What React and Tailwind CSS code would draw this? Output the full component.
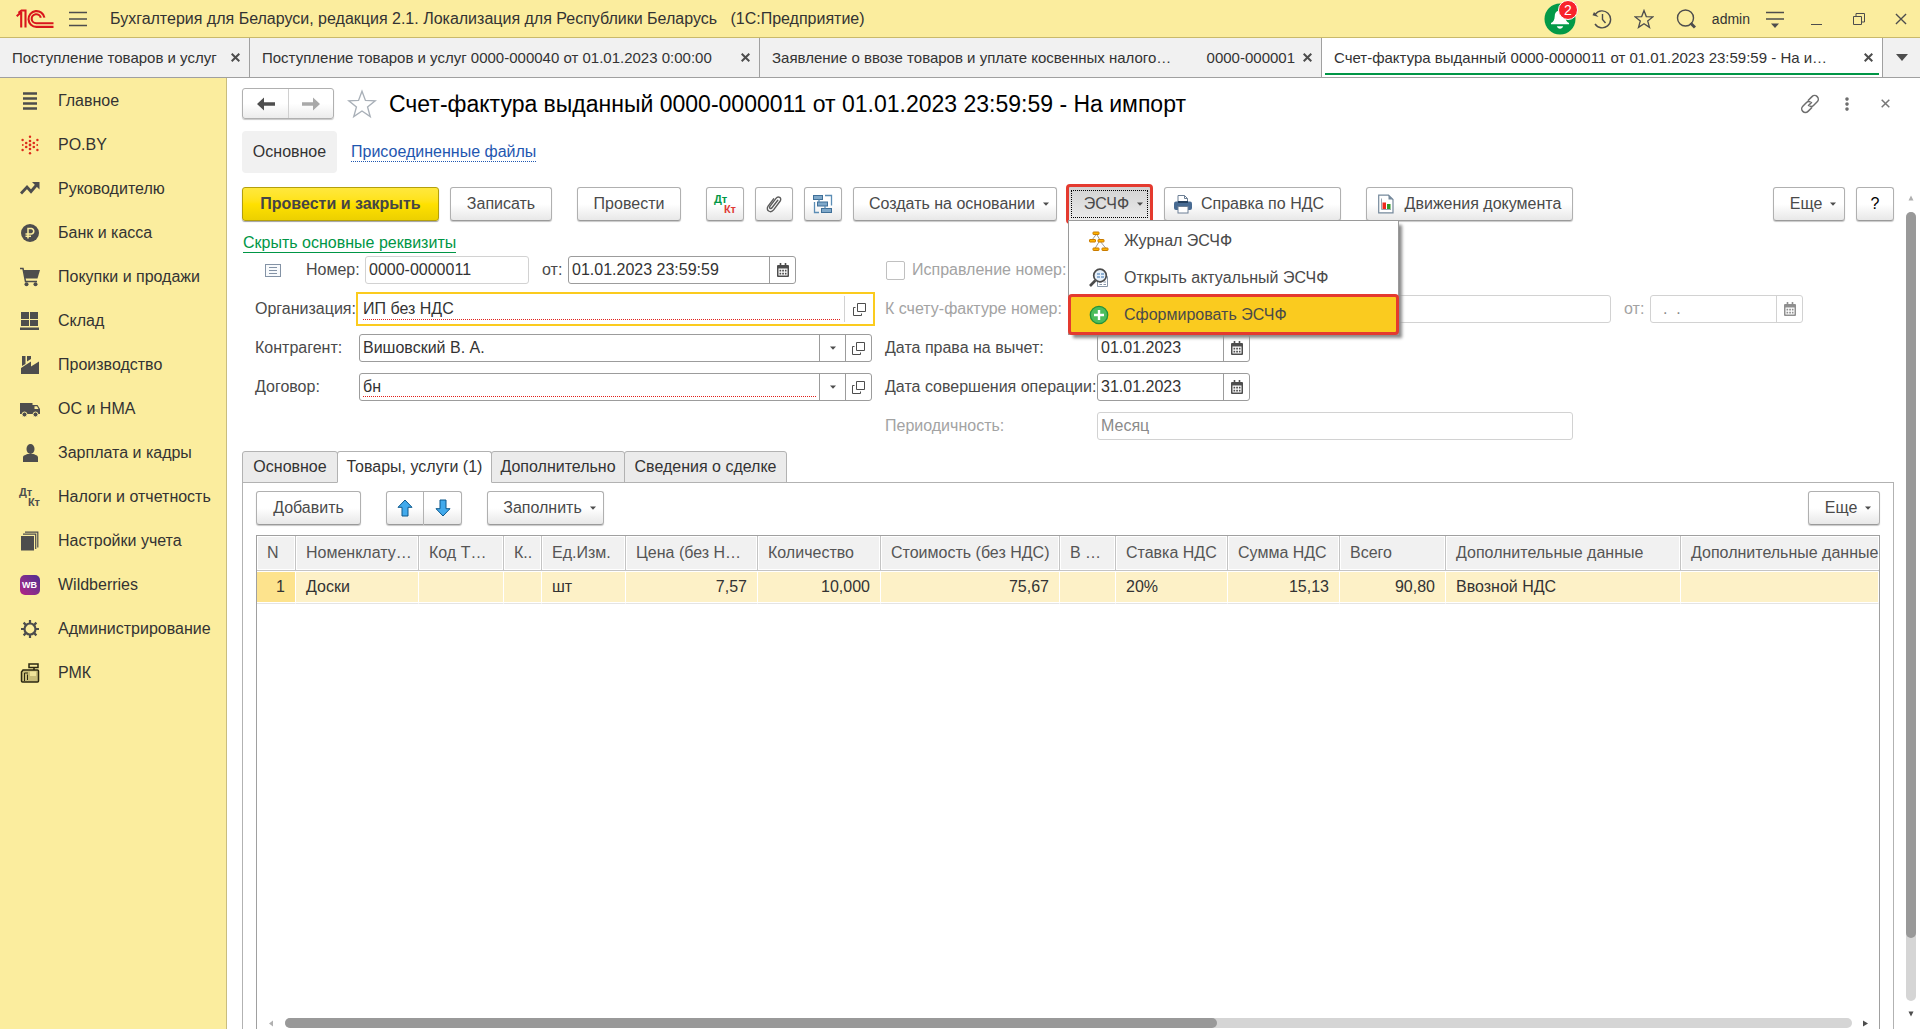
import React, { useState } from "react";
import clsx from "clsx";

const DARK = "#4d4d4d";

/* ---------- icons ---------- */

const Svg = ({ w = 20, h = 20, children, className }) => (
    <svg width={w} height={h} viewBox={`0 0 ${w} ${h}`} fill="none" className={clsx("shrink-0", className)} aria-hidden="true">
        {children}
    </svg>
);

const Logo = () => (
    <Svg w={38} h={20}>
        <g stroke="#d9161c" strokeWidth="2.1">
            <path d="M0.700 7.200L4.800 3.500H5.200V18.500" />
            <path d="M2.500 3.800L5.500 1.500H9.500V18.500" />
            <path d="M28.400 8.600A8 7.900 0 1 0 20.400 17.900H37.500" />
            <path d="M24.800 8.800A4.600 4.500 0 1 0 20.400 14.200H37.500" />
        </g>
    </Svg>
);

const MenuIcon = () => (
    <Svg w={18} h={16}>
        <path d="M0 1.500H18M0 8H18M0 14.500H18" stroke={DARK} strokeWidth="1.300" />
    </Svg>
);

const BellIcon = () => (
    <Svg w={32} h={32}>
        <circle cx="16" cy="16" r="15.500" fill="#039a48" />
        <path d="M16 6c-1 0-1.600.7-1.600 1.600-2.700.9-3.600 3-3.700 5.800-.2 3.400-1 5.200-3.700 6.700v1.200h18v-1.200c-2.700-1.500-3.500-3.300-3.700-6.700-.1-2.800-1-4.900-3.700-5.800C17.600 6.700 17 6 16 6z" fill="#fff" />
        <path d="M12.800 23.200h6.400c-.5 1.600-1.600 2.500-3.200 2.500s-2.700-.9-3.200-2.500z" fill="#fff" />
    </Svg>
);

const HistoryIcon = () => (
    <Svg w={20} h={20}>
        <path d="M3.300 5.300A8.500 8.500 0 1 1 3 15" stroke={DARK} strokeWidth="1.400" />
        <path d="M0.500 6.300L6.500 8L2 3z" fill={DARK} />
        <path d="M10.500 5V10.500L13.500 14" stroke={DARK} strokeWidth="1.400" />
    </Svg>
);

const StarIcon = ({ size = 20, color = DARK }) => (
    <svg width={size} height={size} viewBox="0 0 20 20" fill="none" className="shrink-0" aria-hidden="true">
        <path d="M10 1.500L12.300 7.600L18.800 7.900L13.700 12L15.500 18.400L10 14.700L4.500 18.400L6.300 12L1.200 7.900L7.700 7.600z" stroke={color} strokeWidth={size > 24 ? 0.9 : 1.3} />
    </svg>
);

const SearchIcon = () => (
    <Svg w={20} h={20}>
        <circle cx="9.500" cy="9" r="8" stroke={DARK} strokeWidth="1.400" />
        <path d="M14.500 14L19 18.500" stroke={DARK} strokeWidth="3" />
    </Svg>
);

const SettingsIcon = () => (
    <Svg w={18} h={18}>
        <path d="M0 2.500H18M0 9H18" stroke={DARK} strokeWidth="1.400" />
        <path d="M5 13.500H13L9 18z" fill={DARK} />
    </Svg>
);

const CrossIcon = ({ size = 9, color = DARK, width = 2 }) => (
    <svg width={size} height={size} viewBox="0 0 9 9" className="shrink-0" aria-hidden="true">
        <path d="M0.700 0.700L8.300 8.300M8.300 0.700L0.700 8.300" stroke={color} strokeWidth={width} />
    </svg>
);

const ArrowIcon = ({ color, flip }) => (
    <Svg w={18} h={14} className={flip && "rotate-180"}>
        <path d="M0 7L7 0.500V5.200H18V8.800H7V13.500z" fill={color} />
    </Svg>
);

const Caret = ({ className }) => (
    <Svg w={6} h={4} className={className}>
        <path d="M0 0.500H6L3 3.700z" fill={DARK} />
    </Svg>
);

const LinkIcon = () => (
    <Svg w={20} h={20}>
        <g stroke="#6e6e6e" strokeWidth="1.500" strokeLinecap="round">
            <path d="M8.300 6.300L12 2.600a3.600 3.600 0 0 1 5.200 5.200L13.500 11.500a3.600 3.600 0 0 1-3.500.8" />
            <path d="M11.700 13.700L8 17.400a3.600 3.600 0 0 1-5.200-5.200L6.500 8.500A3.600 3.600 0 0 1 10 7.700" />
            <path d="M8.500 11.500L11.500 8.500" />
        </g>
    </Svg>
);

const DtKt = ({ dt, kt }) => (
    <span className="flex w-[22px] flex-col text-[11px] leading-[10px] font-bold">
        <span className={clsx("self-start", dt)}>Дт</span>
        <span className={clsx("self-end", kt)}>Кт</span>
    </span>
);

const ClipIcon = () => (
    <Svg w={18} h={20}>
        <path
            d="M12.800 6.300L7 13.800c-1.200 1.600-3.200.2-2.100-1.400L11 4.300c2.200-2.800 6.200-.4 4.200 2.700L8.600 15.900c-3 3.800-8.300.4-5.500-3.700L8.600 4.800"
            stroke="#5c5c5c"
            strokeWidth="1.400"
            strokeLinecap="round"
        />
    </Svg>
);

const StructureIcon = () => (
    <Svg w={20} h={20}>
        <g fill="#7fa8c9" stroke="#3f6f98">
            <rect x="0.500" y="1.500" width="9" height="4" />
            <rect x="4.500" y="8" width="10" height="4" />
            <rect x="8.500" y="14.500" width="10" height="4" />
        </g>
        <path d="M12 1.500H18.500V11.500M1.500 8V18.500H6M6 5.500V8M12 12V14.500" stroke="#5b8db5" strokeWidth="1.300" />
    </Svg>
);

const PrinterIcon = () => (
    <Svg w={20} h={20}>
        <path d="M5 8V1.500H11.500L14.500 4.500V8" fill="#fff" stroke="#6c7f95" />
        <path d="M11.500 1.500V4.500H14.500" stroke="#6c7f95" />
        <rect x="1" y="7.500" width="18" height="8.500" rx="2" fill="#476a92" />
        <rect x="5" y="7" width="10" height="2" fill="#24405f" />
        <rect x="5" y="12.500" width="10" height="6.500" fill="#fff" stroke="#6c7f95" />
    </Svg>
);

const ReportIcon = () => (
    <Svg w={16} h={20}>
        <path d="M0.700 1.200H10.500L15 5.500V18.800H0.700z" fill="#fff" stroke="#75899c" strokeWidth="1.200" />
        <path d="M10.500 1.200V5.500H15z" fill="#75899c" />
        <path d="M3.500 4.500V15.500H13" stroke="#9aa7b3" />
        <rect x="4.500" y="8.500" width="3.500" height="6.500" fill="#ee2a1c" />
        <rect x="9" y="10" width="3.500" height="5" fill="#2f9a2a" />
    </Svg>
);

const BlueArrow = ({ down }) => (
    <Svg w={16} h={18} className={down && "rotate-180"}>
        <path d="M8 1L15 8.300H11V17H5V8.300H1z" fill="#42aaec" stroke="#0c588c" strokeLinejoin="round" />
    </Svg>
);

const CalendarIcon = ({ color = DARK }) => (
    <Svg w={12} h={14}>
        <path d="M0 3a1 1 0 0 1 1-1H11a1 1 0 0 1 1 1V13a1 1 0 0 1-1 1H1a1 1 0 0 1-1-1z" fill={color} />
        <path d="M1.500 5.500H10.500V12.500H1.500z" fill="#fff" />
        <path d="M2.500 7.700H9.500M2.500 10.600H9.500" stroke={color} strokeWidth="1.700" strokeDasharray="1.700 1" />
        <path d="M3.500 0V3.500M8.500 0V3.500" stroke={color} strokeWidth="1.600" />
    </Svg>
);

const OpenIcon = () => (
    <Svg w={13} h={13}>
        <path d="M4.500 0.500H12.500V8.500H4.500z" stroke={DARK} />
        <path d="M2.500 4.500H0.500V12.500H8.500V10.500" stroke={DARK} />
    </Svg>
);

const JournalIcon = () => (
    <Svg w={20} h={20}>
        <path d="M7.500 3L3 9M7.500 3L11 9M10.500 10L6 17.500M11 10L17 17.500" stroke="#9b9b9b" />
        <g fill="#ffb400" stroke="#c97b00">
            <rect x="4" y="1" width="6" height="2.500" rx="0.500" />
            <rect x="0.500" y="8.500" width="6" height="2.500" rx="0.500" />
            <rect x="9" y="8.500" width="6" height="2.500" rx="0.500" />
            <rect x="4" y="17" width="6" height="2.500" rx="0.500" />
            <rect x="13" y="17" width="6" height="2.500" rx="0.500" />
        </g>
    </Svg>
);

const LensIcon = () => (
    <Svg w={20} h={20}>
        <path d="M8.500 8.500H18.500V18.500H8.500z" fill="#fff" stroke="#8796a8" />
        <path d="M10.500 14H13M14.500 14H17M10.500 16.500H13M14.500 16.500H17" stroke="#8796a8" />
        <circle cx="11" cy="7.500" r="6.300" fill="#e6f0fa" stroke="#4b4b4b" strokeWidth="1.700" />
        <path d="M8 6H11M12 6H15M8 9H11M12 9H15" stroke="#8fb0d4" strokeWidth="2" />
        <path d="M6.300 12.500L1 18" stroke="#4b4b4b" strokeWidth="2.600" />
    </Svg>
);

const PlusIcon = () => (
    <Svg w={20} h={20}>
        <circle cx="10" cy="10" r="8.700" fill="#4dbd5c" stroke="#23913a" strokeWidth="1.300" />
        <path d="M10 5V15M5 10H15" stroke="#fff" strokeWidth="2.400" />
    </Svg>
);

const ListIcon = () => (
    <Svg w={16} h={13}>
        <rect x="0.500" y="0.500" width="15" height="12" fill="#f8fafc" stroke="#8392a5" />
        <path d="M4 3.500H12M4 6.500H12M4 9.500H12" stroke="#8392a5" />
    </Svg>
);

/* sidebar icons */

const MainIcon = () => (
    <Svg>
        <path d="M3 2.500H17M3 7.500H17M3 12.500H17M3 17.500H17" stroke={DARK} strokeWidth="2.500" />
    </Svg>
);

const PoByIcon = () => (
    <Svg>
        <g fill="#dd2a1b">
            <circle cx="10" cy="1.800" r="1.200" />
            <circle cx="10" cy="6" r="1.300" />
            <circle cx="10" cy="10" r="1.400" />
            <circle cx="10" cy="14" r="1.300" />
            <circle cx="10" cy="18.200" r="1.200" />
            <circle cx="6.200" cy="8" r="1.300" />
            <circle cx="6.200" cy="12" r="1.300" />
            <circle cx="13.800" cy="8" r="1.300" />
            <circle cx="13.800" cy="12" r="1.300" />
            <circle cx="2.600" cy="5" r="1.200" />
            <circle cx="2.600" cy="15" r="1.200" />
            <circle cx="17.400" cy="5" r="1.200" />
            <circle cx="17.400" cy="15" r="1.200" />
            <circle cx="2.800" cy="10" r="0.900" />
            <circle cx="17.200" cy="10" r="0.900" />
        </g>
    </Svg>
);

const TrendIcon = () => (
    <Svg>
        <path d="M1 14.500L7 8L11 12.500L17 5.500" stroke={DARK} strokeWidth="2.800" />
        <path d="M12 3H19.500V10.500z" fill={DARK} />
    </Svg>
);

const RubleIcon = () => (
    <Svg>
        <circle cx="10" cy="10" r="9" fill={DARK} />
        <path d="M8 15.500V5.500H11.500a2.800 2.800 0 0 1 0 5.500H5.500M5.500 13.300H11" stroke="#fbed9e" strokeWidth="1.500" />
    </Svg>
);

const CartIcon = () => (
    <Svg>
        <path d="M0 1.500H3L5.500 14.500H17" stroke={DARK} strokeWidth="1.500" />
        <path d="M3.500 3H20L17.500 11.500H5z" fill={DARK} />
        <circle cx="6.500" cy="17.300" r="2" fill={DARK} />
        <circle cx="15.500" cy="17.300" r="2" fill={DARK} />
    </Svg>
);

const StockIcon = () => (
    <Svg>
        <path d="M1 1H9V8H1zM10 1H18V8H10zM1 9H9V15H1zM10 9H18V15H10zM0 16.500H19V19H0z" fill={DARK} />
    </Svg>
);

const FactoryIcon = () => (
    <Svg>
        <path d="M1 19V13L11 6.500V11.500L19 6.500V19z" fill={DARK} />
        <path d="M2 1H5.500V9L2 11zM7 1H11V4L7 6.500z" fill={DARK} />
    </Svg>
);

const TruckIcon = () => (
    <Svg>
        <path d="M0 4H12.500V15H0zM12 6H17.500L20 10V15H12z" fill={DARK} />
        <path d="M14.500 7.300H17L18.500 10H14.500z" fill="#fbed9e" />
        <circle cx="4.500" cy="15.500" r="2.500" fill={DARK} stroke="#fbed9e" />
        <circle cx="15.500" cy="15.500" r="2.500" fill={DARK} stroke="#fbed9e" />
    </Svg>
);

const PersonIcon = () => (
    <Svg>
        <ellipse cx="10.500" cy="6" rx="4" ry="5" fill={DARK} />
        <path d="M3 19v-4.500c0-2.500 3-2.500 4.500-3.500h6c1.500 1 4.500 1 4.500 3.500V19z" fill={DARK} />
    </Svg>
);

const BooksIcon = () => (
    <Svg>
        <path d="M1 5H14V19.500H1z" fill={DARK} />
        <path d="M3 3.200H15.700V18M5 1.200H17.800V16.500" stroke={DARK} strokeWidth="1.200" />
    </Svg>
);

const WbIcon = () => (
    <span className="flex size-5 items-center justify-center rounded-[5px] bg-linear-to-tr from-[#b31d86] to-[#4d2c91] text-[9px] font-bold text-white">
        WB
    </span>
);

const GearIcon = () => (
    <Svg>
        <circle cx="10" cy="10" r="5.500" stroke={DARK} strokeWidth="2.200" />
        <path
            d="M10 1V4.500M10 15.500V19M1 10H4.500M15.500 10H19M3.600 3.600L6.100 6.100M13.900 13.900L16.400 16.400M3.600 16.400L6.100 13.900M13.900 6.100L16.400 3.600"
            stroke={DARK}
            strokeWidth="2.200"
        />
    </Svg>
);

const RegisterIcon = () => (
    <Svg>
        <path d="M9 1H18V4.500H9zM14 4.500V7" stroke="#2c2812" strokeWidth="1.500" />
        <path d="M3 7H17.500a1 1 0 0 1 1 1V18a1 1 0 0 1-1 1H2.500a1 1 0 0 1-1-1V9z" fill="#c9bd78" stroke="#2c2812" strokeWidth="1.500" />
        <path d="M4.500 18V10H8M7.500 11.500V17" stroke="#2c2812" />
        <path d="M10 8.500H16V13H10z" fill="#efe39a" />
    </Svg>
);

/* ---------- data ---------- */

const sections = [
    { title: "Главное", icon: <MainIcon /> },
    { title: "PO.BY", icon: <PoByIcon /> },
    { title: "Руководителю", icon: <TrendIcon /> },
    { title: "Банк и касса", icon: <RubleIcon /> },
    { title: "Покупки и продажи", icon: <CartIcon /> },
    { title: "Склад", icon: <StockIcon /> },
    { title: "Производство", icon: <FactoryIcon /> },
    { title: "ОС и НМА", icon: <TruckIcon /> },
    { title: "Зарплата и кадры", icon: <PersonIcon /> },
    { title: "Налоги и отчетность", icon: <DtKt dt="text-[#4d4d4d]" kt="text-[#4d4d4d]" /> },
    { title: "Настройки учета", icon: <BooksIcon /> },
    { title: "Wildberries", icon: <WbIcon /> },
    { title: "Администрирование", icon: <GearIcon /> },
    { title: "РМК", icon: <RegisterIcon /> },
];

const columns = [
    { title: "N", value: "1", width: "w-[39px]", right: true },
    { title: "Номенклату…", value: "Доски", width: "w-[123px]" },
    { title: "Код Т…", value: "", width: "w-[85px]" },
    { title: "К..", value: "", width: "w-[38px]" },
    { title: "Ед.Изм.", value: "шт", width: "w-[84px]" },
    { title: "Цена (без Н…", value: "7,57", width: "w-[132px]", right: true },
    { title: "Количество", value: "10,000", width: "w-[123px]", right: true },
    { title: "Стоимость (без НДС)", value: "75,67", width: "w-[179px]", right: true },
    { title: "В …", value: "", width: "w-[56px]" },
    { title: "Ставка НДС", value: "20%", width: "w-[112px]" },
    { title: "Сумма НДС", value: "15,13", width: "w-[112px]", right: true },
    { title: "Всего", value: "90,80", width: "w-[106px]", right: true },
    { title: "Дополнительные данные", value: "Ввозной НДС", width: "w-[235px]" },
    { title: "Дополнительные данные", value: "", width: "w-auto" },
];

/* ---------- controls ---------- */

const Button = ({ children, className, ...props }) => (
    <button
        type="button"
        className={clsx(
            "flex h-[34px] shrink-0 items-center justify-center rounded-[3px] border border-[#b0b0b0] border-b-[#9a9a9a] bg-linear-to-b from-white from-50% to-[#e8e8e8] whitespace-nowrap text-[#4a4a4a] shadow-[0_1px_1px_#c8c8c8]",
            className
        )}
        {...props}
    >
        {children}
    </button>
);

const Field = ({ id, value, className, inputClass, disabled, muted, children }) => (
    <div
        className={clsx(
            "flex h-7 min-w-0 items-stretch rounded-[3px] border bg-white",
            disabled || muted ? "border-[#d2d2d2]" : "border-[#9c9c9c]",
            className
        )}
    >
        <input
            id={id}
            type="text"
            defaultValue={value}
            disabled={disabled}
            className={clsx("w-full min-w-0 bg-transparent px-[3px] outline-none", disabled ? "text-[#8a8a8a]" : "text-[#333333]", inputClass)}
        />
        {children}
    </div>
);

const FieldButton = ({ label, disabled, className, children }) => (
    <button
        type="button"
        aria-label={label}
        className={clsx("flex w-[26px] shrink-0 items-center justify-center border-l", disabled ? "border-[#d2d2d2]" : "border-[#9c9c9c]", className)}
    >
        {children}
    </button>
);

const RefField = ({ id, value, error }) => (
    <Field id={id} value={value} className="flex-1" inputClass={error && "mx-[3px] my-[3px] border-b border-dotted border-[#e0201b] px-0!"}>
        <FieldButton label="Выбрать">
            <Caret />
        </FieldButton>
        <FieldButton label="Открыть">
            <OpenIcon />
        </FieldButton>
    </Field>
);

const WindowTab = ({ title, number, width, active }) => (
    <div
        className={clsx(
            "relative flex h-full items-center border-r border-[#a0a0a0] pr-[9px] pl-3 text-[15px]",
            active ? "min-w-0 bg-white" : "shrink-0 bg-[#f1f1f1]",
            width
        )}
    >
        <button type="button" className="flex min-w-0 flex-1 justify-between whitespace-nowrap">
            <span className="truncate">{title}</span>
            {number && <span className="shrink-0">{number}</span>}
        </button>
        <button type="button" aria-label="Закрыть" className="ml-2 shrink-0">
            <CrossIcon />
        </button>
        {active && <span className="absolute inset-x-[3px] bottom-[2px] h-[2px] bg-[#009646]" />}
    </div>
);

/* ---------- page parts ---------- */

const TitleBar = () => (
    <header className="flex h-[38px] shrink-0 items-center border-b border-[#c9b96b] bg-[#fbed9e] pr-[13px] pl-4">
        <Logo />
        <button type="button" aria-label="Меню" className="ml-[15px]">
            <MenuIcon />
        </button>
        <div className="ml-[23px] flex-1 truncate whitespace-pre">
            Бухгалтерия для Беларуси, редакция 2.1. Локализация для Республики Беларусь   (1С:Предприятие)
        </div>
        <button type="button" aria-label="Уведомления" className="relative">
            <BellIcon />
            <span className="absolute -top-[3px] left-[14px] flex size-5 items-center justify-center rounded-full border border-white bg-[#f8232b] text-sm text-white">2</span>
        </button>
        <button type="button" aria-label="История" className="ml-4">
            <HistoryIcon />
        </button>
        <button type="button" aria-label="Избранное" className="ml-[22px]">
            <StarIcon />
        </button>
        <button type="button" aria-label="Поиск" className="ml-[22px]">
            <SearchIcon />
        </button>
        <button type="button" className="ml-4 text-sm">admin</button>
        <button type="button" aria-label="Настройки" className="ml-4">
            <SettingsIcon />
        </button>
        <button type="button" aria-label="Свернуть" className="mt-3 ml-[27px] h-px w-[11px] bg-[#4d4d4d]" />
        <button type="button" aria-label="Восстановить" className="ml-[31px]">
            <Svg w={12} h={12}>
                <path d="M0.500 3.500H8.500V11.500H0.500zM3 3V0.500H11.500V9H9" stroke={DARK} />
            </Svg>
        </button>
        <button type="button" aria-label="Закрыть" className="ml-[30px]">
            <CrossIcon size={12} width={1} />
        </button>
    </header>
);

const Sidebar = () => (
    <nav className="flex w-[227px] shrink-0 flex-col border-r border-[#c9bd7e] bg-[#fbed9e] pt-px">
        {sections.map((item) => (
            <button key={item.title} type="button" className="flex h-11 items-center gap-[18px] pl-[19px] text-left whitespace-nowrap">
                <span className="flex w-[21px] shrink-0 justify-center">{item.icon}</span>
                {item.title}
            </button>
        ))}
    </nav>
);

const EschfMenu = () => (
    <div className="absolute top-9 left-[2px] z-10 w-[331px] border border-[#9a9a9a] bg-white pt-px shadow-[4px_4px_3px_-1px_#8a8a8a]">
        <button type="button" className="flex h-[37px] w-full items-center gap-[15px] pl-5 text-[#4a4a4a]">
            <JournalIcon />
            Журнал ЭСЧФ
        </button>
        <button type="button" className="flex h-[37px] w-full items-center gap-[15px] pl-5 text-[#4a4a4a]">
            <LensIcon />
            Открыть актуальный ЭСЧФ
        </button>
        <button type="button" className="-mx-px -mt-[2px] -mb-px flex h-[41px] w-[331px] items-center gap-[15px] rounded-[4px] border-3 border-[#e43a2f] bg-[#facb1f] pl-[18px] text-[#4a4a4a]">
            <PlusIcon />
            Сформировать ЭСЧФ
        </button>
    </div>
);

const Toolbar = () => {
    const [open, setOpen] = useState(true);

    return (
        <div className="flex items-center">
            <button
                type="button"
                className="h-[34px] w-[197px] shrink-0 rounded-[3px] border border-[#b39f0d] bg-linear-to-b from-[#ffe83c] via-[#ffe100] to-[#ecd000] font-bold whitespace-nowrap text-[#454545] shadow-[0_1px_1px_#a0a0a0]"
            >
                Провести и закрыть
            </button>
            <Button className="ml-[11px] w-[102px]">Записать</Button>
            <Button className="ml-[25px] w-[104px]">Провести</Button>
            <Button className="ml-[25px] w-[38px]" aria-label="Проводки">
                <DtKt dt="text-[#029746]" kt="text-[#e03a35]" />
            </Button>
            <Button className="ml-[11px] w-[38px]" aria-label="Файлы">
                <ClipIcon />
            </Button>
            <Button className="ml-[11px] w-[38px]" aria-label="Структура подчиненности">
                <StructureIcon />
            </Button>
            <Button className="ml-[11px] w-[204px] gap-2 pl-2">
                Создать на основании <Caret />
            </Button>
            <div className="relative -my-1 ml-[9px] shrink-0">
                <button
                    type="button"
                    aria-expanded={open}
                    onClick={() => setOpen(!open)}
                    className="flex h-10 w-[87px] items-center justify-center rounded-[4px] border-3 border-[#e43a2f] bg-linear-to-b from-[#d2d2d2] to-[#ececec] p-[2px] text-[#4a4a4a]"
                >
                    <span className="flex h-7 w-full items-center justify-center gap-2 border border-dotted border-black pl-2">
                        ЭСЧФ <Caret />
                    </span>
                </button>
                {open && <EschfMenu />}
            </div>
            <Button className="ml-[11px] w-[177px] gap-2 pr-2">
                <PrinterIcon /> Справка по НДС
            </Button>
            <Button className="ml-[25px] w-[207px] gap-[11px]">
                <ReportIcon /> Движения документа
            </Button>
            <Button className="ml-auto w-[72px] gap-2 pl-2">
                Еще <Caret />
            </Button>
            <Button className="ml-[11px] w-[38px] text-black!">?</Button>
        </div>
    );
};

const DocumentForm = () => (
    <form className="mt-[3px] flex text-[#4a4a4a]">
        <div className="flex w-[643px] shrink-0 flex-col gap-[11px] pl-[13px]">
            <div className="flex h-7 items-center">
                <span className="ml-[10px]">
                    <ListIcon />
                </span>
                <label htmlFor="number" className="ml-[25px] w-[59px]">Номер:</label>
                <Field id="number" value="0000-0000011" className="w-[164px]" muted />
                <label htmlFor="date" className="ml-[13px] w-[26px]">от:</label>
                <Field id="date" value="01.01.2023 23:59:59" className="w-[228px]">
                    <FieldButton label="Календарь">
                        <CalendarIcon />
                    </FieldButton>
                </Field>
            </div>
            <div className="flex h-7 items-center pr-[10px]">
                <label htmlFor="org" className="w-[101px] shrink-0 whitespace-nowrap">Организация:</label>
                <div className="flex h-[34px] flex-1 items-center border-2 border-[#fbcb1e] bg-white pl-[5px]">
                    <input
                        id="org"
                        type="text"
                        defaultValue="ИП без НДС"
                        className="mr-1 h-[22px] min-w-0 flex-1 border-b border-dotted border-[#e0201b] text-[#333333] outline-none"
                    />
                    <FieldButton label="Открыть" className="h-[26px] w-[29px]! border-[#d2d2d2]!">
                        <OpenIcon />
                    </FieldButton>
                </div>
            </div>
            <div className="flex h-7 items-center pr-[13px]">
                <label htmlFor="partner" className="w-[104px] shrink-0">Контрагент:</label>
                <RefField id="partner" value="Вишовский В. А." />
            </div>
            <div className="flex h-7 items-center pr-[13px]">
                <label htmlFor="contract" className="w-[104px] shrink-0">Договор:</label>
                <RefField id="contract" value="бн" error />
            </div>
        </div>

        <div className="flex flex-1 flex-col gap-[11px]">
            <div className="flex h-7 items-center text-[#a3a3a3]">
                <input id="fix" type="checkbox" disabled className="mr-[7px] ml-px size-[19px] appearance-none rounded-[2px] border border-[#c0c0c0] bg-white" />
                <label htmlFor="fix">Исправление номер:</label>
            </div>
            <div className="flex h-7 items-center text-[#a3a3a3]">
                <label htmlFor="base" className="w-[212px] shrink-0">К счету-фактуре номер:</label>
                <Field id="base" className="w-[514px]" disabled />
                <label htmlFor="baseDate" className="ml-[13px] w-[26px]">от:</label>
                <Field id="baseDate" value="  .  ." className="w-[153px]" inputClass="whitespace-pre" disabled>
                    <FieldButton label="Календарь" disabled>
                        <CalendarIcon color="#8f8f8f" />
                    </FieldButton>
                </Field>
            </div>
            <div className="flex h-7 items-center">
                <label htmlFor="deduct" className="w-[212px] shrink-0">Дата права на вычет:</label>
                <Field id="deduct" value="01.01.2023" className="w-[153px]">
                    <FieldButton label="Календарь">
                        <CalendarIcon />
                    </FieldButton>
                </Field>
            </div>
            <div className="flex h-7 items-center">
                <label htmlFor="operation" className="w-[212px] shrink-0 whitespace-nowrap">Дата совершения операции:</label>
                <Field id="operation" value="31.01.2023" className="w-[153px]">
                    <FieldButton label="Календарь">
                        <CalendarIcon />
                    </FieldButton>
                </Field>
            </div>
            <div className="flex h-7 items-center text-[#a3a3a3]">
                <label htmlFor="period" className="w-[212px] shrink-0">Периодичность:</label>
                <Field id="period" value="Месяц" className="w-[476px]" disabled />
            </div>
        </div>
    </form>
);

const FormTab = ({ title, width, active }) => (
    <button
        type="button"
        role="tab"
        aria-selected={active}
        className={clsx(
            "-mr-px h-8 shrink-0 rounded-t-[3px] border border-[#b2b2b2] whitespace-nowrap",
            active ? "relative border-b-white bg-white" : "bg-[#ebebeb]",
            width
        )}
    >
        {title}
    </button>
);

const GoodsTable = () => (
    <div className="flex min-h-0 flex-1 flex-col overflow-hidden border border-b-0 border-[#a0a0a0]">
        <table className="w-full table-fixed border-separate border-spacing-0 text-left whitespace-nowrap">
            <thead>
                <tr className="h-[35px] text-[#555555]">
                    {columns.map((col, i) => (
                        <th
                            key={i}
                            className={clsx(
                                "overflow-hidden border-b border-[#c4c4c4] bg-[#f1f1f1] pl-[10px] font-normal shadow-[inset_0_0_0_1px_#ffffff]",
                                i < columns.length - 1 && "border-r",
                                col.width
                            )}
                        >
                            {col.title}
                        </th>
                    ))}
                </tr>
            </thead>
            <tbody>
                <tr className="h-[33px] text-[#333333]">
                    {columns.map((col, i) => (
                        <td
                            key={i}
                            className={clsx(
                                "border-r border-b border-r-white border-b-[#e4e4e4] px-[10px] shadow-[inset_0_1px_0_#ffffff,inset_0_-1px_0_#ffffff]",
                                i === 0 ? "bg-[#fde38d]" : "bg-[#fdf1c7]",
                                col.right && "text-right"
                            )}
                        >
                            {col.value}
                        </td>
                    ))}
                </tr>
            </tbody>
        </table>
        <div className="mt-auto flex h-[11px] items-start pr-[10px] pl-[11px]">
            <Svg w={6} h={10}>
                <path d="M5 2.500V8.500L1 5.500z" fill="#b0b0b0" />
            </Svg>
            <div className="mx-[11px] h-[10px] flex-1 rounded-full bg-[#d5d5d5]">
                <div className="h-full w-[59.5%] rounded-full bg-[#999999]" />
            </div>
            <Svg w={6} h={10}>
                <path d="M0 2.500V8.500L5 5.500z" fill={DARK} />
            </Svg>
        </div>
    </div>
);

const App = () => {
    return (
        <div className="flex h-screen flex-col overflow-hidden bg-white font-['Liberation_Sans',Arial,sans-serif] text-base leading-5 text-[#333333]">
            <TitleBar />
            <div className="flex h-10 shrink-0 border-b border-[#a0a0a0] bg-[#f1f1f1]">
                <WindowTab title="Поступление товаров и услуг" width="w-[250px]" />
                <WindowTab title="Поступление товаров и услуг 0000-000040 от 01.01.2023 0:00:00" width="w-[510px]" />
                <WindowTab title="Заявление о ввозе товаров и уплате косвенных налого…" number="0000-000001" width="w-[562px]" />
                <WindowTab title="Счет-фактура выданный 0000-0000011 от 01.01.2023 23:59:59 - На и…" width="flex-1" active />
                <button type="button" aria-label="Все окна" className="flex w-[37px] shrink-0 items-center justify-center">
                    <Svg w={12} h={7}>
                        <path d="M0 0H12L6 7z" fill={DARK} />
                    </Svg>
                </button>
            </div>

            <div className="flex min-h-0 flex-1">
                <Sidebar />
                <main className="flex min-w-0 flex-1 flex-col pt-[10px] pl-[15px]">
                    <div className="flex h-[31px] shrink-0 items-center pr-[30px]">
                        <div className="flex h-[31px] shrink-0 rounded-[3px] border border-[#b0b0b0] bg-linear-to-b from-white from-50% to-[#ececec] shadow-[0_1px_1px_#c8c8c8]">
                            <button type="button" aria-label="Назад" className="flex w-[45px] items-center justify-center">
                                <ArrowIcon color={DARK} />
                            </button>
                            <button type="button" aria-label="Вперед" className="flex w-[45px] items-center justify-center border-l border-[#d0d0d0]">
                                <ArrowIcon color="#a9a9a9" flip />
                            </button>
                        </div>
                        <button type="button" aria-label="В избранное" className="ml-[13px]">
                            <StarIcon size={30} color="#a9b0b8" />
                        </button>
                        <h1 className="ml-3 flex-1 truncate text-[23px] leading-7 text-black">
                            Счет-фактура выданный 0000-0000011 от 01.01.2023 23:59:59 - На импорт
                        </h1>
                        <button type="button" aria-label="Ссылка">
                            <LinkIcon />
                        </button>
                        <button type="button" aria-label="Еще действия" className="ml-[25px]">
                            <Svg w={4} h={14}>
                                <path d="M2 2V2.100M2 7V7.100M2 12V12.100" stroke="#6e6e6e" strokeWidth="3.600" strokeLinecap="round" />
                            </Svg>
                        </button>
                        <button type="button" aria-label="Закрыть" className="ml-8">
                            <CrossIcon color="#777777" width={1.5} />
                        </button>
                    </div>

                    <div className="mt-3 flex h-[42px] shrink-0 items-center">
                        <button type="button" className="h-full w-[95px] rounded-[4px] bg-[#f1f1f1]">Основное</button>
                        <a href="#files" className="ml-[14px] border-b border-dotted border-[#1f57b0] leading-[18px] text-[#1f57b0]">
                            Присоединенные файлы
                        </a>
                    </div>

                    <div className="mt-[14px] flex min-h-0 flex-1">
                        <div className="flex min-w-0 flex-1 flex-col">
                            <Toolbar />
                            <div className="mt-3">
                                <a href="#details" className="ml-px inline-block border-b border-[#009646] leading-[18px] text-[#009646]">
                                    Скрыть основные реквизиты
                                </a>
                            </div>
                            <DocumentForm />

                            <div role="tablist" className="mt-[11px] flex shrink-0">
                                <FormTab title="Основное" width="w-[96px]" />
                                <FormTab title="Товары, услуги (1)" width="w-[155px]" active />
                                <FormTab title="Дополнительно" width="w-[134px]" />
                                <FormTab title="Сведения о сделке" width="w-[163px]" />
                            </div>
                            <div className="-mt-px flex min-h-0 flex-1 flex-col border border-b-0 border-[#b2b2b2] px-[13px] pt-2">
                                <div className="mb-[10px] flex">
                                    <Button className="w-[105px]">Добавить</Button>
                                    <Button className="ml-[25px] w-[38px] rounded-r-none" aria-label="Вверх">
                                        <BlueArrow />
                                    </Button>
                                    <Button className="w-[38px] rounded-l-none border-l-0" aria-label="Вниз">
                                        <BlueArrow down />
                                    </Button>
                                    <Button className="ml-[25px] w-[117px] gap-2 pl-2">
                                        Заполнить <Caret />
                                    </Button>
                                    <Button className="ml-auto w-[72px] gap-2 pl-2">
                                        Еще <Caret />
                                    </Button>
                                </div>
                                <GoodsTable />
                            </div>
                        </div>

                        {/* vertical scroll bar */}
                        <div className="ml-2 flex w-[18px] shrink-0 flex-col items-center pt-2 pb-3">
                            <Svg w={6} h={6}>
                                <path d="M0.500 5.500H5.500L3 0.500z" fill="#b0b0b0" />
                            </Svg>
                            <div className="mt-[11px] mb-[10px] w-[10px] flex-1 rounded-full bg-[#d5d5d5]">
                                <div className="h-[92%] rounded-full bg-[#999999]" />
                            </div>
                            <Svg w={6} h={6}>
                                <path d="M0.500 0.500H5.500L3 5.500z" fill={DARK} />
                            </Svg>
                        </div>
                    </div>
                </main>
            </div>
        </div>
    );
};

export default App;
